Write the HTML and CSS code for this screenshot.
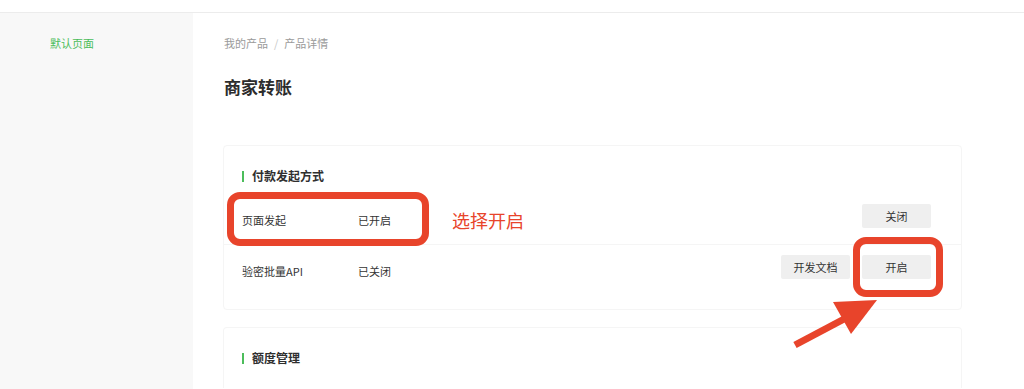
FILE: index.html
```html
<!DOCTYPE html>
<html lang="zh-CN">
<head>
<meta charset="utf-8">
<title>商家转账</title>
<link rel="stylesheet" href="styles.css">
</head>
<body>
<header class="topbar"></header>
<div class="layout">
  <aside class="sidebar">
    <div class="nav-item active">默认页面</div>
  </aside>
  <main class="main">
    <nav class="breadcrumb">
      <span>我的产品</span><span class="sep">/</span><span>产品详情</span>
    </nav>
    <h1 class="page-title">商家转账</h1>

    <section class="card">
      <h2 class="card-title">付款发起方式</h2>
      <div class="rows">
        <div class="row">
          <div class="cell name">页面发起</div>
          <div class="cell status">已开启</div>
          <div class="actions">
            <button class="btn">关闭</button>
          </div>
        </div>
        <div class="row last">
          <div class="cell name">验密批量API</div>
          <div class="cell status">已关闭</div>
          <div class="actions">
            <button class="btn">开发文档</button>
            <button class="btn">开启</button>
          </div>
        </div>
      </div>
    </section>

    <section class="card card2">
      <h2 class="card-title">额度管理</h2>
    </section>
  </main>
</div>

<div class="annot box1"></div>
<div class="annot box2"></div>
<div class="annot note">选择开启</div>
<svg class="annot arrow" width="1024" height="389" viewBox="0 0 1024 389">
  <line x1="795" y1="345" x2="846" y2="318" stroke="#e8442b" stroke-width="7"/>
  <polygon points="833,302 877,300 851,334" fill="#e8442b"/>
</svg>
</body>
</html>
```

FILE: styles.css
```css
html, body {
  margin: 0;
  padding: 0;
  background: #fff;
  font-family: "Noto Sans CJK SC", "Liberation Sans", sans-serif;
  color: #353535;
  height: 389px;
  overflow: hidden;
}

.topbar {
  height: 12px;
  border-bottom: 1px solid #ececec;
  background: #fff;
}

.layout {
  display: flex;
  height: 376px;
}

.sidebar {
  width: 193px;
  flex: none;
  background: #f8f8f8;
  padding: 22px 0 0 50px;
  box-sizing: border-box;
}

.nav-item {
  font-size: 11px;
  line-height: 16px;
}

.nav-item.active {
  color: #4cbd5b;
}

.main {
  flex: 1;
  padding: 22px 62px 0 31px;
  box-sizing: border-box;
}

.breadcrumb {
  font-size: 11px;
  line-height: 16px;
  color: #9a9a9a;
  display: flex;
}

.breadcrumb .sep {
  margin: 0 6px;
  color: #c8c8c8;
}

.page-title {
  margin: 24px 0 0;
  font-size: 17px;
  line-height: 24px;
  font-weight: 700;
  color: #2c2c2c;
}

.card {
  margin-top: 46px;
  margin-left: -1px;
  border: 1px solid #f5f5f5;
  border-radius: 4px;
  padding: 22px 0 14px;
  background: #fff;
}

.card2 {
  margin-top: 17px;
  height: 61px;
  box-sizing: border-box;
  border-bottom: none;
  border-radius: 4px 4px 0 0;
}

.card-title {
  margin: 0 0 0 18px;
  font-size: 12px;
  line-height: 16px;
  font-weight: 700;
  color: #2f2f2f;
  display: flex;
  align-items: center;
}

.card-title::before {
  content: "";
  display: inline-block;
  width: 2px;
  height: 11px;
  background: #4cbd5b;
  margin-right: 8px;
}

.rows {
  margin-top: 12px;
}

.row {
  display: flex;
  align-items: center;
  padding: 8px 30px 16px 18px;
  border-bottom: 1px solid #f5f5f5;
}

.row.last {
  padding-top: 10px;
  border-bottom: none;
}

.cell {
  font-size: 11px;
  line-height: 16px;
  padding-top: 7px;
  color: #333;
}

.cell.name {
  width: 116px;
}

.actions {
  margin-left: auto;
  display: flex;
  gap: 12px;
}

.btn {
  width: 69px;
  height: 24px;
  border: none;
  border-radius: 2px;
  background: #efefef;
  font-family: inherit;
  font-size: 11px;
  color: #333;
  padding: 0;
  cursor: pointer;
}

.annot {
  position: absolute;
}

.box1 {
  left: 227px;
  top: 192px;
  width: 202px;
  height: 54px;
  border: 7px solid #e8442b;
  border-radius: 13px;
  box-sizing: border-box;
}

.box2 {
  left: 853px;
  top: 237px;
  width: 90px;
  height: 60px;
  border: 7px solid #e8442b;
  border-radius: 13px;
  box-sizing: border-box;
}

.note {
  left: 452px;
  top: 207px;
  font-size: 18px;
  line-height: 26px;
  color: #e8442b;
}

.arrow {
  left: 0;
  top: 0;
  pointer-events: none;
}
```
